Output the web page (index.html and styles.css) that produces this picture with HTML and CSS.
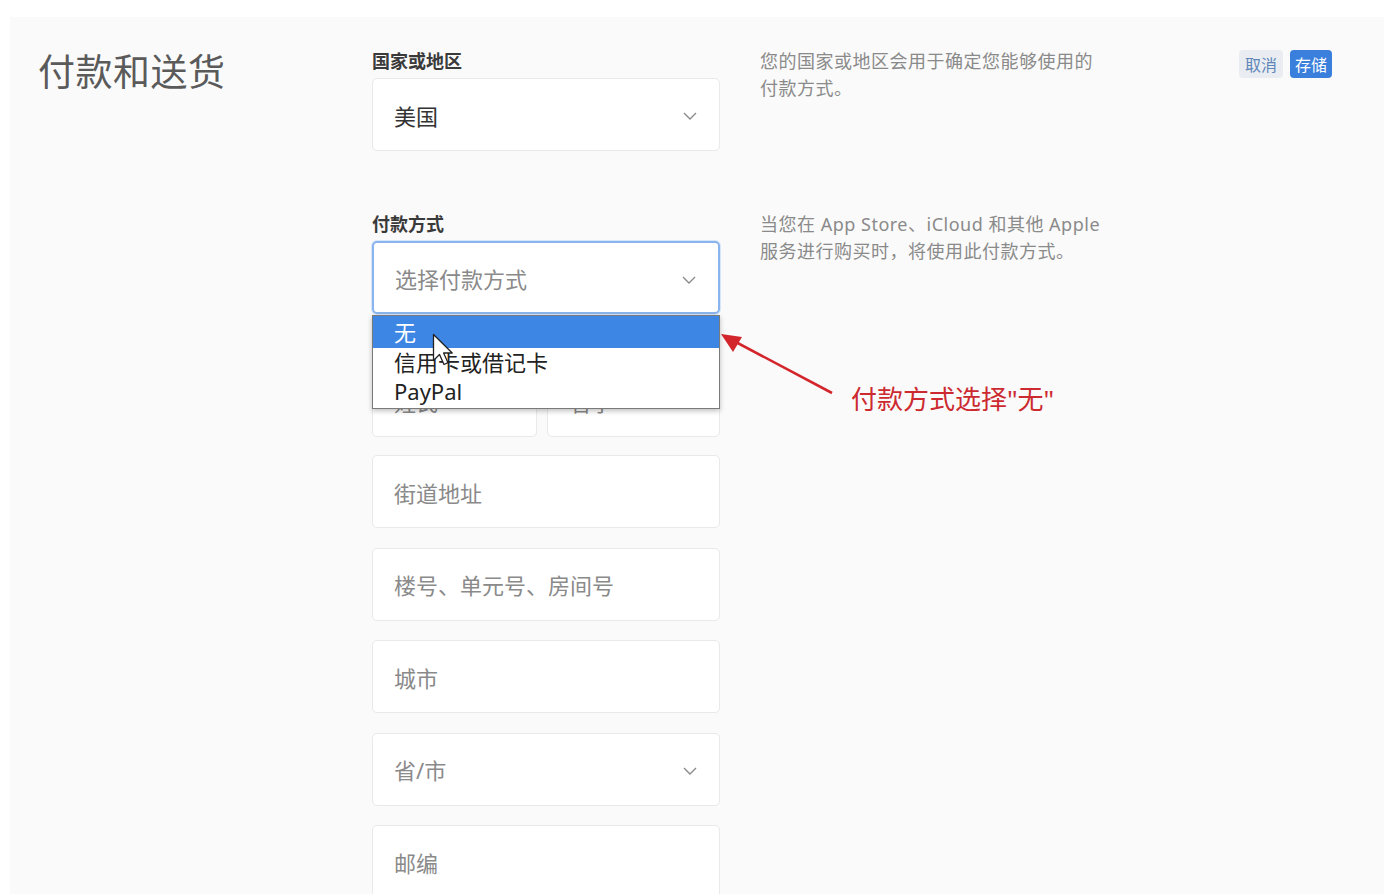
FILE: index.html
```html
<!DOCTYPE html>
<html lang="zh-CN">
<head>
<meta charset="utf-8">
<title>付款和送货</title>
<link rel="stylesheet" href="styles.css">
</head>
<body>
<div class="panel">
  <h1 class="title">付款和送货</h1>
  <div class="main">
    <section class="row">
      <div class="field">
        <div class="label">国家或地区</div>
        <div class="box select"><span class="value">美国</span>
          <svg class="chev" width="14" height="8" viewBox="0 0 14 8"><path d="M1 1l6 6 6-6" fill="none" stroke="#8a8a8a" stroke-width="1.4"/></svg>
        </div>
      </div>
      <p class="desc">您的国家或地区会用于确定您能够使用的<br>付款方式。</p>
    </section>

    <section class="row row-pay">
      <div class="field">
        <div class="label">付款方式</div>
        <div class="pay-wrap">
          <div class="box select focus"><span class="ph">选择付款方式</span>
            <svg class="chev" width="14" height="8" viewBox="0 0 14 8"><path d="M1 1l6 6 6-6" fill="none" stroke="#8a8a8a" stroke-width="1.4"/></svg>
          </div>
          <ul class="menu">
            <li class="opt active">无</li>
            <li class="opt">信用卡或借记卡</li>
            <li class="opt">PayPal</li>
          </ul>
          <svg class="cursor" width="22" height="34" viewBox="0 0 22 34"><path d="M1.5 1.5v26l6-6 4.5 10 4-1.8-4.4-9.7h8.6z" fill="#fff" stroke="#222" stroke-width="1.3" stroke-linejoin="round"/></svg>
        </div>
        <div class="halves">
          <div class="box"><span class="ph">姓氏</span></div>
          <div class="box"><span class="ph">名字</span></div>
        </div>
        <div class="box first"><span class="ph">街道地址</span></div>
        <div class="box"><span class="ph">楼号、单元号、房间号</span></div>
        <div class="box"><span class="ph">城市</span></div>
        <div class="box select"><span class="ph">省/市</span>
          <svg class="chev" width="14" height="8" viewBox="0 0 14 8"><path d="M1 1l6 6 6-6" fill="none" stroke="#8a8a8a" stroke-width="1.4"/></svg>
        </div>
        <div class="box"><span class="ph">邮编</span></div>
      </div>
      <p class="desc">当您在 App Store、iCloud 和其他 Apple<br>服务进行购买时，将使用此付款方式。</p>
    </section>
  </div>
  <div class="actions">
    <button class="btn cancel">取消</button>
    <button class="btn save">存储</button>
  </div>
  <div class="note">
    <svg class="arrow" width="120" height="70" viewBox="0 0 120 70"><path d="M114 62L14 9" stroke="#d3262c" stroke-width="2.6" fill="none"/><path d="M3 3l21 3-9 15z" fill="#d3262c"/></svg>
    <span class="note-text">付款方式选择"无"</span>
  </div>
</div>
</body>
</html>
```
FILE: styles.css
```css
* { box-sizing: border-box; }
html, body { margin: 0; padding: 0; background: #fff; }
body {
  font-family: "Noto Sans", "Noto Sans CJK SC", sans-serif;
  color: #333;
  height: 894px;
  overflow: hidden;
}
.panel {
  position: relative;
  margin: 17px 0 0 10px;
  background: #fafafa;
  height: 877px;
  display: flex;
  align-items: flex-start;
  padding: 30px 0 0 28px;
}
.title {
  width: 334px;
  flex: none;
  margin: 2px 0 0;
  font-size: 37px;
  line-height: 46px;
  font-weight: 400;
  color: #5a5a5a;
  letter-spacing: 0.5px;
}
.main { flex: none; display: flex; flex-direction: column; }
.row { display: flex; align-items: flex-start; }
.row-pay { margin-top: 59px; }
.field { width: 348px; flex: none; display: flex; flex-direction: column; }
.label {
  font-size: 18px;
  line-height: 22px;
  font-weight: 700;
  color: #3a3a3a;
  margin: 3px 0 6px;
}
.desc {
  width: 380px;
  margin: 1px 0 0 40px;
  font-size: 18px;
  letter-spacing: 0.5px;
  line-height: 27px;
  color: #8a8a8a;
}
.box {
  position: relative;
  height: 73px;
  background: #fff;
  border: 1px solid #e9e9e9;
  border-radius: 5px;
  display: flex;
  align-items: center;
  padding: 0 21px;
  font-size: 22px;
  margin-top: 19.5px;
}
.label + .box, .pay-wrap .box, .halves .box { margin-top: 0; }
.box.first { margin-top: 18px; }
.value { color: #333; }
.ph { color: #8a8a8a; }
.chev { position: absolute; right: 22px; top: 33px; }
.focus { border: 2px solid #8ab4ee; box-shadow: 0 0 0 1px #d6e5fa; }
.pay-wrap { position: relative; }
.menu {
  position: absolute;
  left: 0;
  top: 74px;
  width: 348px;
  margin: 0;
  padding: 0 0 2px;
  list-style: none;
  background: #fff;
  border: 1px solid #7a7a7a;
  box-shadow: 0 2px 5px rgba(0,0,0,0.25);
  z-index: 5;
}
.opt {
  font-size: 22px;
  line-height: 29px;
  padding: 0 21px;
  color: #222;
}
.opt.active { background: #3e86e4; color: #fff; line-height: 32px; }
.cursor { position: absolute; left: 60px; top: 92px; z-index: 6; }
.halves {
  display: grid;
  grid-template-columns: 165px 173px;
  gap: 10px;
  margin-top: 50px;
}
.actions {
  margin-left: auto;
  margin-right: 52px;
  margin-top: 3px;
  display: flex;
  gap: 7px;
}
.btn {
  font-family: "Noto Sans CJK SC", sans-serif;
  font-size: 16px;
  height: 28px;
  padding: 0 5px;
  border-radius: 4px;
  border: none;
  line-height: 28px;
}
.cancel { background: #e9edf2; color: #5f86b8; padding: 0 6px; }
.save { background: #3a7fdc; color: #fff; }
.note {
  position: absolute;
  left: 708px;
  top: 314px;
  display: flex;
  align-items: flex-start;
}
.arrow { flex: none; }
.note-text {
  margin: 52px 0 0 13px;
  font-size: 26px;
  line-height: 32px;
  color: #cc2a30;
  white-space: nowrap;
}
```
